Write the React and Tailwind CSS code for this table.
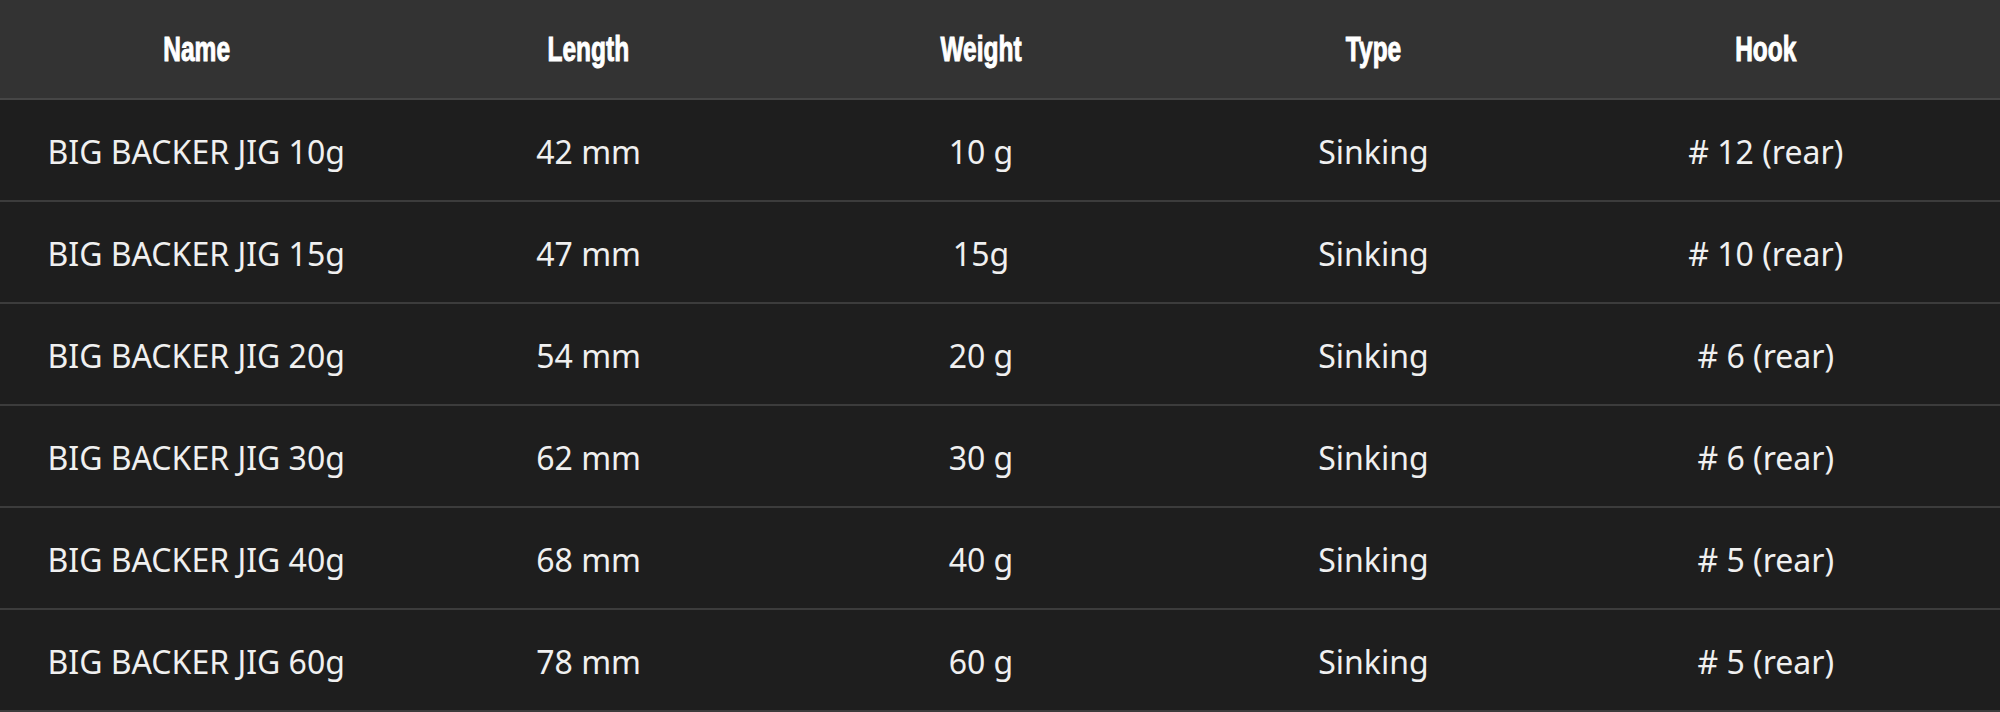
import React from 'react';

const rows = [
  { name: 'BIG BACKER JIG 10g', length: '42 mm', weight: '10 g', type: 'Sinking', hook: '# 12 (rear)' },
  { name: 'BIG BACKER JIG 15g', length: '47 mm', weight: '15g', type: 'Sinking', hook: '# 10 (rear)' },
  { name: 'BIG BACKER JIG 20g', length: '54 mm', weight: '20 g', type: 'Sinking', hook: '# 6 (rear)' },
  { name: 'BIG BACKER JIG 30g', length: '62 mm', weight: '30 g', type: 'Sinking', hook: '# 6 (rear)' },
  { name: 'BIG BACKER JIG 40g', length: '68 mm', weight: '40 g', type: 'Sinking', hook: '# 5 (rear)' },
  { name: 'BIG BACKER JIG 60g', length: '78 mm', weight: '60 g', type: 'Sinking', hook: '# 5 (rear)' },
];

const headers = ['Name', 'Length', 'Weight', 'Type', 'Hook'];

const App = () => {
  return (
    <div className="w-[2000px] h-[712px] bg-[#1e1e1e] overflow-hidden">
      {/* Header */}
      <div className="h-[100px] bg-[#333333] border-b-2 border-[#464646]">
        <div className="w-[1962px] h-full grid grid-cols-5 items-center">
          {headers.map((h) => (
            <div key={h} className="text-center">
              <span className="inline-block scale-x-[0.7] text-white font-bold text-[35px] leading-none [-webkit-text-stroke:1px_white] [font-family:'Liberation_Sans',Arial,sans-serif]">
                {h}
              </span>
            </div>
          ))}
        </div>
      </div>

      {/* Rows */}
      {rows.map((r) => (
        <div key={r.name} className="h-[102px] bg-[#1e1e1e] border-b-2 border-[#3c3c3c]">
          <div className="w-[1962px] h-full grid grid-cols-5 items-center pt-1 text-[#f0f0f0] text-[32px] [font-family:'Noto_Sans',sans-serif]">
            <div className="text-center whitespace-pre">{r.name}</div>
            <div className="text-center whitespace-pre">{r.length}</div>
            <div className="text-center whitespace-pre">{r.weight}</div>
            <div className="text-center whitespace-pre">{r.type}</div>
            <div className="text-center whitespace-pre">{r.hook}</div>
          </div>
        </div>
      ))}
    </div>
  );
};

export default App;
